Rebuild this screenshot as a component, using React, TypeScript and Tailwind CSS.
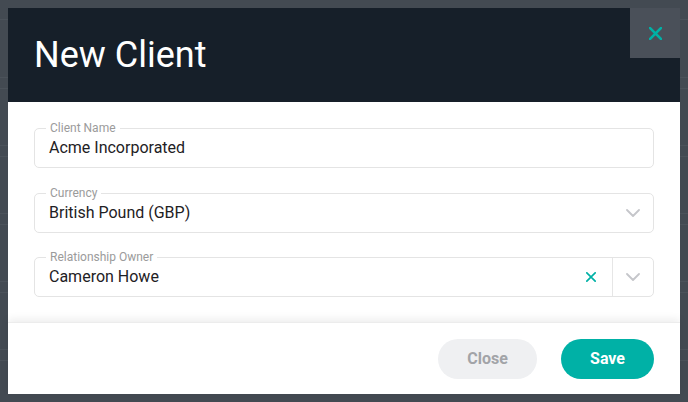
import React from "react";

const font = { fontFamily: "Roboto, 'Noto Sans', sans-serif" };

function Chevron() {
  return (
    <svg width="14" height="8" viewBox="0 0 14 8" fill="none">
      <path d="M1 1l6 6 6-6" stroke="#c5c6ca" strokeWidth="1.8" strokeLinecap="round" strokeLinejoin="round" />
    </svg>
  );
}

function XIcon({ size, color, w }: { size: number; color: string; w: number }) {
  return (
    <svg width={size} height={size} viewBox="0 0 12 12" fill="none">
      <path d="M1 1l10 10M11 1L1 11" stroke={color} strokeWidth={w} strokeLinecap="square" />
    </svg>
  );
}

function Field({ label, value, children, className }: { label: string; value: string; children?: React.ReactNode; className?: string }) {
  return (
    <div className={`relative h-[40px] rounded-[5px] border border-[#e4e4e4] flex items-center ${className ?? ""}`}>
      <span className="absolute left-[11px] top-[-9px] bg-white px-[4px] text-[12px] leading-[16px] text-[#9b9b9b]">{label}</span>
      <span className="pl-[14px] text-[16px] text-[#1e2124] flex-1">{value}</span>
      {children}
    </div>
  );
}

export default function App() {
  const lines = [19, 77, 88, 145, 156, 213, 224, 281, 292, 349, 360];
  return (
    <div className="relative w-[688px] h-[402px] bg-[#434a52] overflow-hidden" style={font}>
      {lines.map((y) => (
        <div key={y} className="absolute left-0 right-0 h-px bg-[#4b525a]" style={{ top: y }} />
      ))}
      <div className="relative p-2">
        <div className="w-[672px] h-[386px] bg-white flex flex-col">
          <div className="h-[94px] bg-[#161f29] flex items-start justify-between">
            <h1 className="pl-[26px] h-[94px] flex items-center text-[36px] text-white font-normal">New Client</h1>
            <button className="w-[50px] h-[50px] bg-[#4a5059] flex items-center justify-center">
              <XIcon size={13} color="#00b1a6" w={2.4} />
            </button>
          </div>
          <div className="flex-1 px-[26px] flex flex-col">
            <Field label="Client Name" value="Acme Incorporated" className="mt-[26px]" />
            <Field label="Currency" value="British Pound (GBP)" className="mt-[25px]">
              <div className="w-[41px] flex items-center justify-center">
                <Chevron />
              </div>
            </Field>
            <Field label="Relationship Owner" value="Cameron Howe" className="mt-[24px]">
              <div className="w-[42px] h-full flex items-center justify-center">
                <XIcon size={10} color="#00b1a6" w={2} />
              </div>
              <div className="w-[41px] h-full border-l border-[#e6e6e6] flex items-center justify-center">
                <Chevron />
              </div>
            </Field>
          </div>
          <div className="h-[72px] shadow-[0_-3px_8px_rgba(0,0,0,0.07)] border-t border-[#ececec] flex items-start justify-end gap-6 pr-[26px] pt-[16px]">
            <button className="w-[99px] h-[40px] rounded-full bg-[#eff0f2] text-[#a2a4a8] text-[16px] font-bold">Close</button>
            <button className="w-[93px] h-[40px] rounded-full bg-[#00b1a6] text-white text-[16px] font-bold">Save</button>
          </div>
        </div>
      </div>
    </div>
  );
}
